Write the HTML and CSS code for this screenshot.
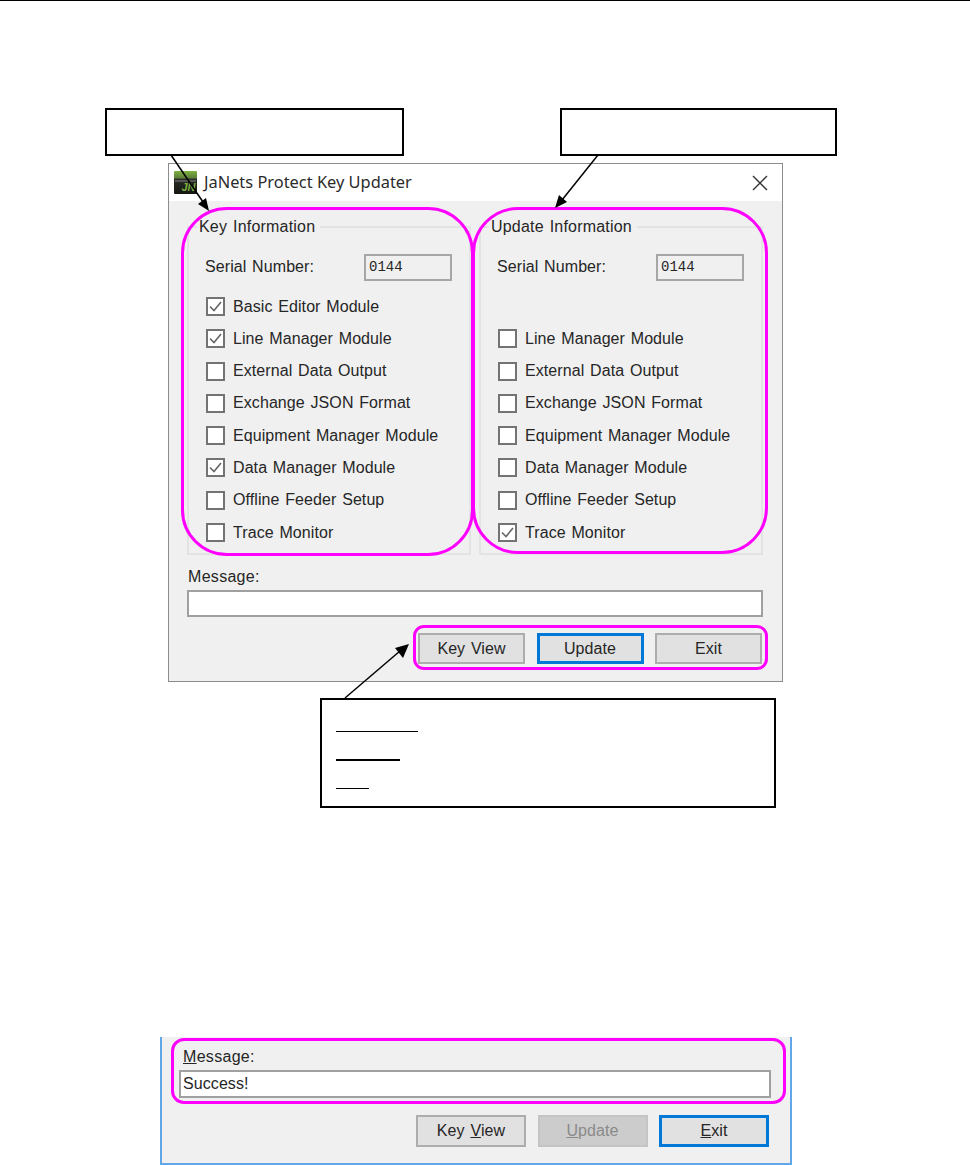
FILE: index.html
```html
<!DOCTYPE html>
<html lang="en">
<head>
<meta charset="utf-8">
<title>JaNets Protect Key Updater</title>
<link rel="stylesheet" href="styles.css">
</head>
<body>
<main class="sheet">
  <section class="win">
    <header class="titlebar">
      <svg class="app-icon" width="23" height="23" viewBox="0 0 23 23" aria-hidden="true">
        <defs><linearGradient id="ig" x1="0" y1="0" x2="0" y2="1"><stop offset="0" stop-color="#7fb13f"/><stop offset="0.3" stop-color="#5d7f3a"/><stop offset="0.36" stop-color="#2a2c28"/><stop offset="1" stop-color="#15160f"/></linearGradient></defs>
        <rect width="23" height="23" rx="1" fill="url(#ig)"/>
        <rect x="1" y="9" width="21" height="2" fill="#555"/>
        <text x="7.5" y="20" class="icon-text">JN</text>
      </svg>
      <span class="title">JaNets Protect Key Updater</span>
      <svg class="close" width="16" height="16" viewBox="0 0 16 16" aria-hidden="true"><path d="M1 1 15 15M15 1 1 15" fill="none" stroke="#333" stroke-width="1.4"/></svg>
    </header>
    <div class="body">
      <div class="groups">
        <fieldset class="group">
          <legend>Key Information</legend>
          <div class="serial"><span>Serial Number:</span><div class="serial-box">0144</div></div>
          <ul class="checks">
            <li><span class="box on"><svg width="15" height="15" viewBox="0 0 15 15"><path d="M2 7.5 6 11.5 13 3" fill="none" stroke="#666" stroke-width="1.6"/></svg></span>Basic Editor Module</li>
            <li><span class="box on"><svg width="15" height="15" viewBox="0 0 15 15"><path d="M2 7.5 6 11.5 13 3" fill="none" stroke="#666" stroke-width="1.6"/></svg></span>Line Manager Module</li>
            <li><span class="box"></span>External Data Output</li>
            <li><span class="box"></span>Exchange JSON Format</li>
            <li><span class="box"></span>Equipment Manager Module</li>
            <li><span class="box on"><svg width="15" height="15" viewBox="0 0 15 15"><path d="M2 7.5 6 11.5 13 3" fill="none" stroke="#666" stroke-width="1.6"/></svg></span>Data Manager Module</li>
            <li><span class="box"></span>Offline Feeder Setup</li>
            <li><span class="box"></span>Trace Monitor</li>
          </ul>
        </fieldset>
        <fieldset class="group">
          <legend>Update Information</legend>
          <div class="serial"><span>Serial Number:</span><div class="serial-box">0144</div></div>
          <ul class="checks">
            <li class="blank"></li>
            <li><span class="box"></span>Line Manager Module</li>
            <li><span class="box"></span>External Data Output</li>
            <li><span class="box"></span>Exchange JSON Format</li>
            <li><span class="box"></span>Equipment Manager Module</li>
            <li><span class="box"></span>Data Manager Module</li>
            <li><span class="box"></span>Offline Feeder Setup</li>
            <li><span class="box on"><svg width="15" height="15" viewBox="0 0 15 15"><path d="M2 7.5 6 11.5 13 3" fill="none" stroke="#666" stroke-width="1.6"/></svg></span>Trace Monitor</li>
          </ul>
        </fieldset>
      </div>
      <div class="msg-label">Message:</div>
      <div class="field"></div>
      <div class="buttons">
        <button class="btn" type="button">Key View</button>
        <button class="btn default" type="button">Update</button>
        <button class="btn" type="button">Exit</button>
      </div>
    </div>
  </section>

  <section class="win2">
    <div class="msg-label"><u>M</u>essage:</div>
    <div class="field">Success!</div>
    <div class="buttons">
      <button class="btn" type="button">Key <u>V</u>iew</button>
      <button class="btn disabled" type="button"><u>U</u>pdate</button>
      <button class="btn default" type="button"><u>E</u>xit</button>
    </div>
  </section>

  <div class="callout c1"></div>
  <div class="callout c2"></div>
  <div class="callout c3">
    <span class="rule r1"></span>
    <span class="rule r2"></span>
    <span class="rule r3"></span>
  </div>

  <div class="ring ring-left"></div>
  <div class="ring ring-right"></div>
  <div class="ring ring-buttons"></div>
  <div class="ring ring-msg"></div>

  <svg class="arrows" width="970" height="1165" viewBox="0 0 970 1165" aria-hidden="true">
    <path d="M171 155 203 202" class="shaft"/><path d="M209 211 198 204 206 198Z"/>
    <path d="M598 155 562 200" class="shaft"/><path d="M555 208 559 195 567 202Z"/>
    <path d="M345 698 400 651" class="shaft"/><path d="M409 644 403 658 395 648Z"/>
  </svg>
</main>
</body>
</html>
```
FILE: styles.css
```css
* { box-sizing: border-box; }
html, body { margin: 0; padding: 0; background: #fff; }
.sheet {
  position: relative;
  width: 970px;
  height: 1165px;
  overflow: hidden;
  border-top: 1px solid #000;
  font-family: "Liberation Sans", Arial, sans-serif;
  font-size: 16px;
  letter-spacing: 0.08px;
  word-spacing: 1.2px;
  color: #262626;
}

/* Main dialog */
.win {
  width: 615px;
  height: 519px;
  margin: 162px 0 0 168px;
  border: 1px solid #8c8c8c;
  background: #f0f0f0;
  display: flex;
  flex-direction: column;
}
.titlebar {
  height: 37px;
  flex: none;
  background: #fff;
  display: flex;
  align-items: center;
  padding: 0 14px 0 5px;
}
.app-icon { flex: none; }
.icon-text { font: italic bold 11px "Liberation Sans", sans-serif; fill: #7fb13f; word-spacing: 0; letter-spacing: 0; }
.title {
  margin: 0 0 2px 7px;
  flex: 1;
  font-family: "Noto Sans", sans-serif;
  font-size: 16.4px;
  letter-spacing: 0;
  word-spacing: 0;
  color: #2b2b2b;
}
.close { flex: none; }
.body { padding: 16px 19px 0 18px; flex: 1; }
.groups { display: grid; grid-template-columns: 284px 284px; column-gap: 8px; }
.group {
  margin: 0;
  min-width: 0;
  height: 338px;
  padding: 0 0 0 17px;
  border: 2px solid #e3e3e3;
  position: relative;
}
.group legend {
  margin-left: -9px;
  padding: 0 5px 0 2px;
  line-height: 20px;
  letter-spacing: 0.2px;
}
.serial {
  display: flex;
  justify-content: space-between;
  align-items: center;
  height: 27px;
  margin: 17px 0 0 -1px;
  padding-right: 17px;
}
.serial span { padding-bottom: 2px; }
.serial-box {
  width: 88px;
  height: 27px;
  border: 2px solid #a6a6a6;
  padding-left: 3px;
  line-height: 23px;
  font-family: "Liberation Mono", monospace;
  font-size: 14px;
  letter-spacing: 0;
}
.checks {
  list-style: none;
  margin: 16px 0 0;
  padding: 0;
  display: flex;
  flex-direction: column;
  row-gap: 13.3px;
}
.checks li {
  height: 19px;
  display: flex;
  align-items: center;
  gap: 8px;
  white-space: nowrap;
}
.box {
  width: 19px;
  height: 19px;
  flex: none;
  border: 2px solid #737373;
  background: #fff;
  display: flex;
}
.msg-label { line-height: 18px; margin: 13px 0 4px 1px; letter-spacing: 0.3px; }
.field {
  height: 27px;
  border: 2px solid #a0a0a0;
  background: #fff;
  line-height: 24px;
  padding-left: 2px;
}
.buttons {
  display: flex;
  justify-content: flex-end;
  column-gap: 11.5px;
  margin-top: 16px;
  padding-right: 1px;
}
.btn {
  width: 107px;
  height: 31px;
  padding: 0;
  border: 2px solid #adadad;
  background: #e1e1e1;
  color: #262626;
  font: inherit;
  letter-spacing: inherit;
  word-spacing: inherit;
}
.btn.default { border: 3px solid #0078d7; }
.btn.disabled { background: #cccccc; border-color: #c4c4c4; color: #8a8a8a; }

/* Cropped dialog at the foot of the page */
.win2 {
  width: 632px;
  height: 128px;
  margin: 355px 0 0 160px;
  padding: 1px 19px 0 17px;
  border: solid #62a8e8;
  border-width: 0 2px 2px;
  background: #f0f0f0;
}
.win2 .msg-label { margin: 10px 0 4px 4px; }
.win2 .field { height: 28px; }
.win2 .btn { width: 110px; height: 32px; }
.win2 .buttons { margin-top: 17px; padding-right: 2px; }

/* Annotations */
.callout { position: absolute; background: #fff; border: 2px solid #000; }
.c1 { left: 105px; top: 107px; width: 299px; height: 48px; }
.c2 { left: 560px; top: 107px; width: 277px; height: 48px; }
.c3 {
  left: 320px; top: 697px; width: 456px; height: 110px;
  display: flex;
  flex-direction: column;
  align-items: flex-start;
  padding: 31px 0 0 14px;
}
.rule { display: block; background: #000; }
.r1 { width: 82px; height: 1px; }
.r2 { width: 64px; height: 2px; margin-top: 27px; }
.r3 { width: 33px; height: 1px; margin-top: 27px; }

.ring { position: absolute; border: 3px solid #ff00ff; }
.ring-left { left: 181px; top: 206px; width: 293px; height: 349px; border-radius: 46px; }
.ring-right { left: 472px; top: 206px; width: 296px; height: 347px; border-radius: 46px; }
.ring-buttons { left: 413px; top: 624px; width: 355px; height: 45px; border-radius: 11px; }
.ring-msg { left: 171px; top: 1037px; width: 615px; height: 66px; border-radius: 13px; }

.arrows { position: absolute; left: 0; top: -1px; pointer-events: none; }
.arrows path { fill: #000; }
.arrows .shaft { fill: none; stroke: #000; stroke-width: 1.5; }
```
